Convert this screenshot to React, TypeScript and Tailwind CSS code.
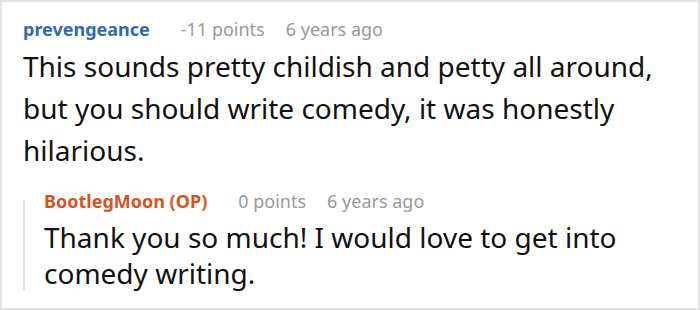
import React from 'react';

const font = { fontFamily: '"Noto Sans", "Open Sans", sans-serif' };

const App = () => {
  return (
    <div className="w-[700px] h-[310px] bg-white border-2 border-[#e4e4e4] overflow-hidden" style={font}>
      <div className="pl-[21px] pr-4 pt-[15px]">
        {/* parent comment */}
        <div className="flex items-baseline text-[18px] leading-[24px]">
          <span className="font-bold text-[#3468b0]">prevengeance</span>
          <span className="ml-[31px] text-[#999999]">-11 points</span>
          <span className="ml-[21px] text-[#999999]">6 years ago</span>
        </div>
        <p className="mt-[4px] text-[28px] leading-[42px] text-[#111111]">
          This sounds pretty childish and petty all around, but you should write comedy, it was honestly hilarious.
        </p>

        {/* reply */}
        <div className="mt-[18px] flex">
          <div className="w-[2px] mt-[11px] bg-[#e4e4e4] shrink-0" />
          <div className="pl-[19px]">
            <div className="flex items-baseline text-[18px] leading-[24px]">
              <span className="font-bold text-[#d9531e]">BootlegMoon (OP)</span>
              <span className="ml-[31px] text-[#999999]">0 points</span>
              <span className="ml-[21px] text-[#999999]">6 years ago</span>
            </div>
            <p className="mt-[6px] text-[28px] leading-[36px] text-[#111111]">
              Thank you so much! I would love to get into comedy writing.
            </p>
          </div>
        </div>
      </div>
    </div>
  );
};

export default App;
